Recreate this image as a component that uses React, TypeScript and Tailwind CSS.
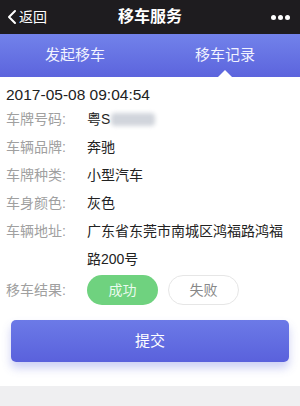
import React from "react";

const rows: Array<{ label: string; value: React.ReactNode }> = [
  {
    label: "车牌号码:",
    value: (
      <span className="flex items-center">
        粤S
        <span className="ml-[1px] inline-block h-[13px] w-[44px] rounded-sm bg-gray-300 blur-[2px]" />
      </span>
    ),
  },
  { label: "车辆品牌:", value: "奔驰" },
  { label: "车牌种类:", value: "小型汽车" },
  { label: "车身颜色:", value: "灰色" },
  { label: "车辆地址:", value: "广东省东莞市南城区鸿福路鸿福路200号" },
];

const App: React.FC = () => {
  return (
    <div
      className="w-[300px] h-[406px] bg-[#efeff1] overflow-hidden"
      style={{ fontFamily: '"Liberation Sans", "Noto Sans CJK SC", sans-serif' }}
    >
      <div className="relative flex h-[34px] items-center justify-center bg-[#1e1c1f] text-white">
        <div className="absolute left-[7px] flex items-center text-[14px]">
          <svg width="10" height="16" viewBox="0 0 10 16" fill="none">
            <path d="M8 2 L2 8 L8 14" stroke="white" strokeWidth="2" strokeLinecap="round" strokeLinejoin="round" />
          </svg>
          <span className="ml-[2px]">返回</span>
        </div>
        <span className="text-[16px] font-semibold">移车服务</span>
        <div className="absolute right-[10px] flex gap-[2px]">
          <span className="h-[5px] w-[5px] rounded-full bg-white" />
          <span className="h-[5px] w-[5px] rounded-full bg-white" />
          <span className="h-[5px] w-[5px] rounded-full bg-white" />
        </div>
      </div>

      <div className="flex h-[43px] bg-gradient-to-b from-[#7282ea] to-[#5c64dd] text-[15px] text-[#f2f3ff]">
        <div className="flex flex-1 items-center justify-center">发起移车</div>
        <div className="relative flex flex-1 items-center justify-center">
          移车记录
          <span className="absolute bottom-0 left-1/2 -ml-[7px] h-0 w-0 border-x-[7px] border-b-[7px] border-x-transparent border-b-white" />
        </div>
      </div>

      <div className="bg-white px-[6px] pt-[8px] pb-[24px]">
        <div className="text-[15.5px] leading-[20px] text-[#222]">2017-05-08 09:04:54</div>
        {rows.map((r) => (
          <div key={r.label} className="flex text-[14px] leading-[28px]">
            <div className="w-[81px] shrink-0 text-[#a0a0a0]">{r.label}</div>
            <div className="w-[203px] text-[#222]">{r.value}</div>
          </div>
        ))}
        <div className="mt-[2px] flex h-[30px] items-center text-[14px]">
          <div className="w-[81px] shrink-0 text-[#a0a0a0]">移车结果:</div>
          <div className="flex h-[30px] w-[71px] items-center justify-center rounded-full bg-[#6fd27f] text-[#eafbee]">
            成功
          </div>
          <div className="ml-[10px] flex h-[30px] w-[71px] items-center justify-center rounded-full border border-[#e6e6e6] text-[#888]">
            失败
          </div>
        </div>
        <div className="mx-[5px] mt-[15px] flex h-[42px] items-center justify-center rounded-[5px] bg-gradient-to-b from-[#6c7ae7] to-[#5a61dc] text-[15px] text-white shadow-[0_6px_10px_rgba(90,100,220,0.3)]">
          提交
        </div>
      </div>
    </div>
  );
};

export default App;
